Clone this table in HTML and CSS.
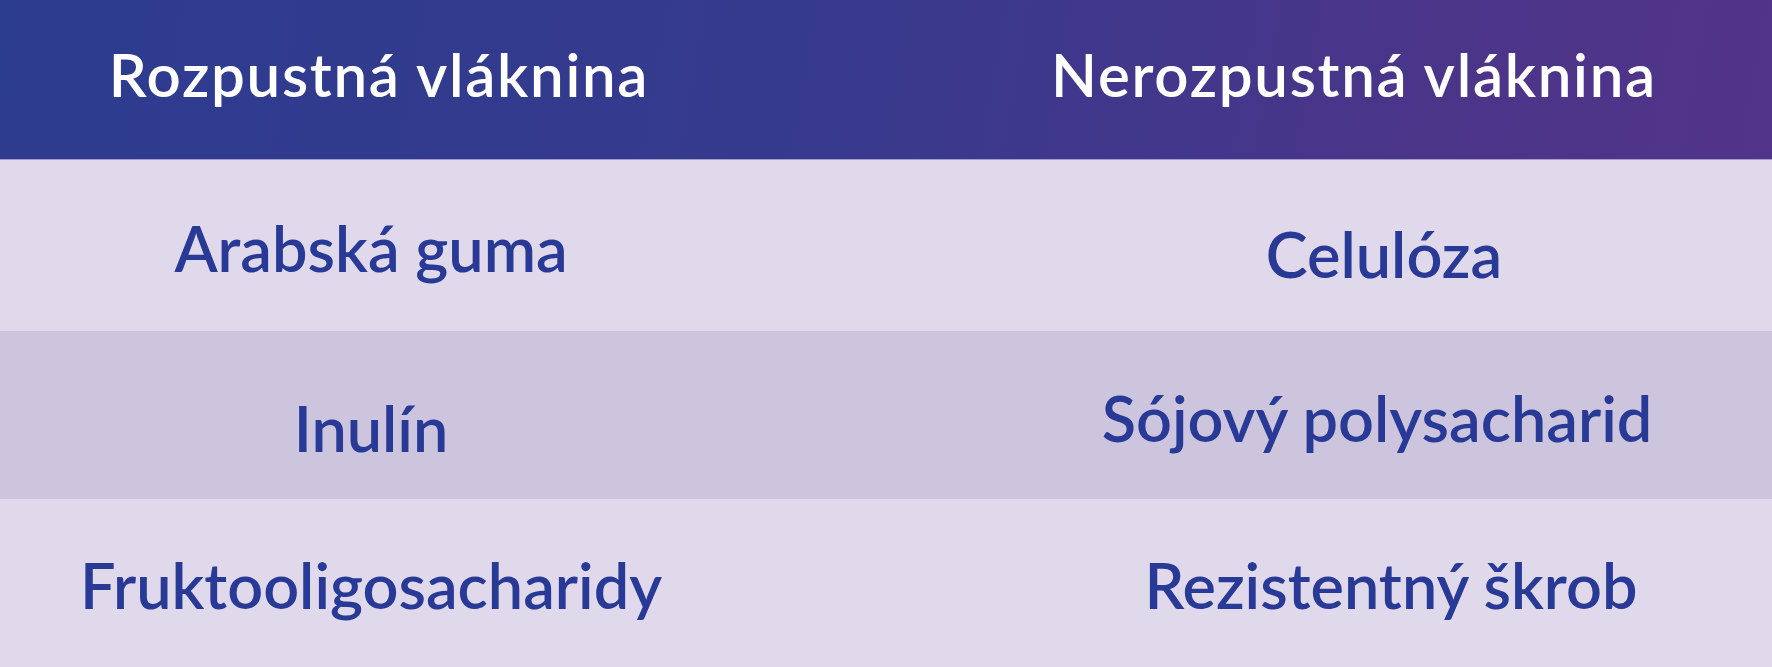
FILE: index.html
```html
<!DOCTYPE html>
<html lang="sk">
<head>
<meta charset="utf-8">
<title>Vláknina</title>
<link rel="stylesheet" href="styles.css">
</head>
<body>
<div class="table">
  <div class="row row--head">
    <div class="cell cell--left head-l">Rozpustná vláknina</div>
    <div class="cell cell--right head-r">Nerozpustná vláknina</div>
  </div>
  <div class="row row--light row--first">
    <div class="cell cell--left r1l">Arabská guma</div>
    <div class="cell cell--right r1r">Celulóza</div>
  </div>
  <div class="row row--dark">
    <div class="cell cell--left r2l">Inulín</div>
    <div class="cell cell--right r2r">Sójový polysacharid</div>
  </div>
  <div class="row row--light">
    <div class="cell cell--left r3l">Fruktooligosacharidy</div>
    <div class="cell cell--right r3r">Rezistentný škrob</div>
  </div>
</div>
</body>
</html>
```
FILE: styles.css
```css
html, body {
  margin: 0;
  padding: 0;
}
body {
  width: 1772px;
  height: 667px;
  overflow: hidden;
  font-family: "Lato", "Open Sans", sans-serif;
  background: #e0d8eb;
}
.table {
  display: flex;
  flex-direction: column;
}
.row {
  display: grid;
  grid-template-columns: 742px 1fr;
}
.cell {
  line-height: 1;
  white-space: nowrap;
  text-align: center;
  box-sizing: border-box;
}
.cell--right {
  padding-left: 254px;
}
.row--head {
  height: 159px;
  border-bottom: 1px solid #a39bd0;
  background: linear-gradient(100deg, #2c3c8f 0%, #363a8d 45%, #4a3589 80%, #52348a 100%);
  color: #ffffff;
  font-weight: 600;
  font-size: 60px;
  letter-spacing: 1.7px;
}
.row--light {
  background: #e0d8eb;
  height: 168px;
}
.row--first {
  height: 171px;
}
.row--dark {
  background: #cdc4de;
  height: 168px;
}
.row--light .cell,
.row--dark .cell {
  color: #283a96;
  font-weight: 600;
  font-size: 63px;
}
.head-l {
  padding-top: 44px;
  padding-left: 16px;
}
.head-r {
  padding-top: 44px;
  padding-left: 194px;
}
.r1l { padding-top: 56px; font-size: 66px; }
.r1r { padding-top: 62px; font-size: 66px; }
.r2l { padding-top: 65px; }
.r2r { padding-top: 55px; padding-left: 240px; }
.r3l { padding-top: 54px; font-size: 61.5px; }
.r3r { padding-top: 54px; font-size: 61px; padding-left: 268px; }
```
